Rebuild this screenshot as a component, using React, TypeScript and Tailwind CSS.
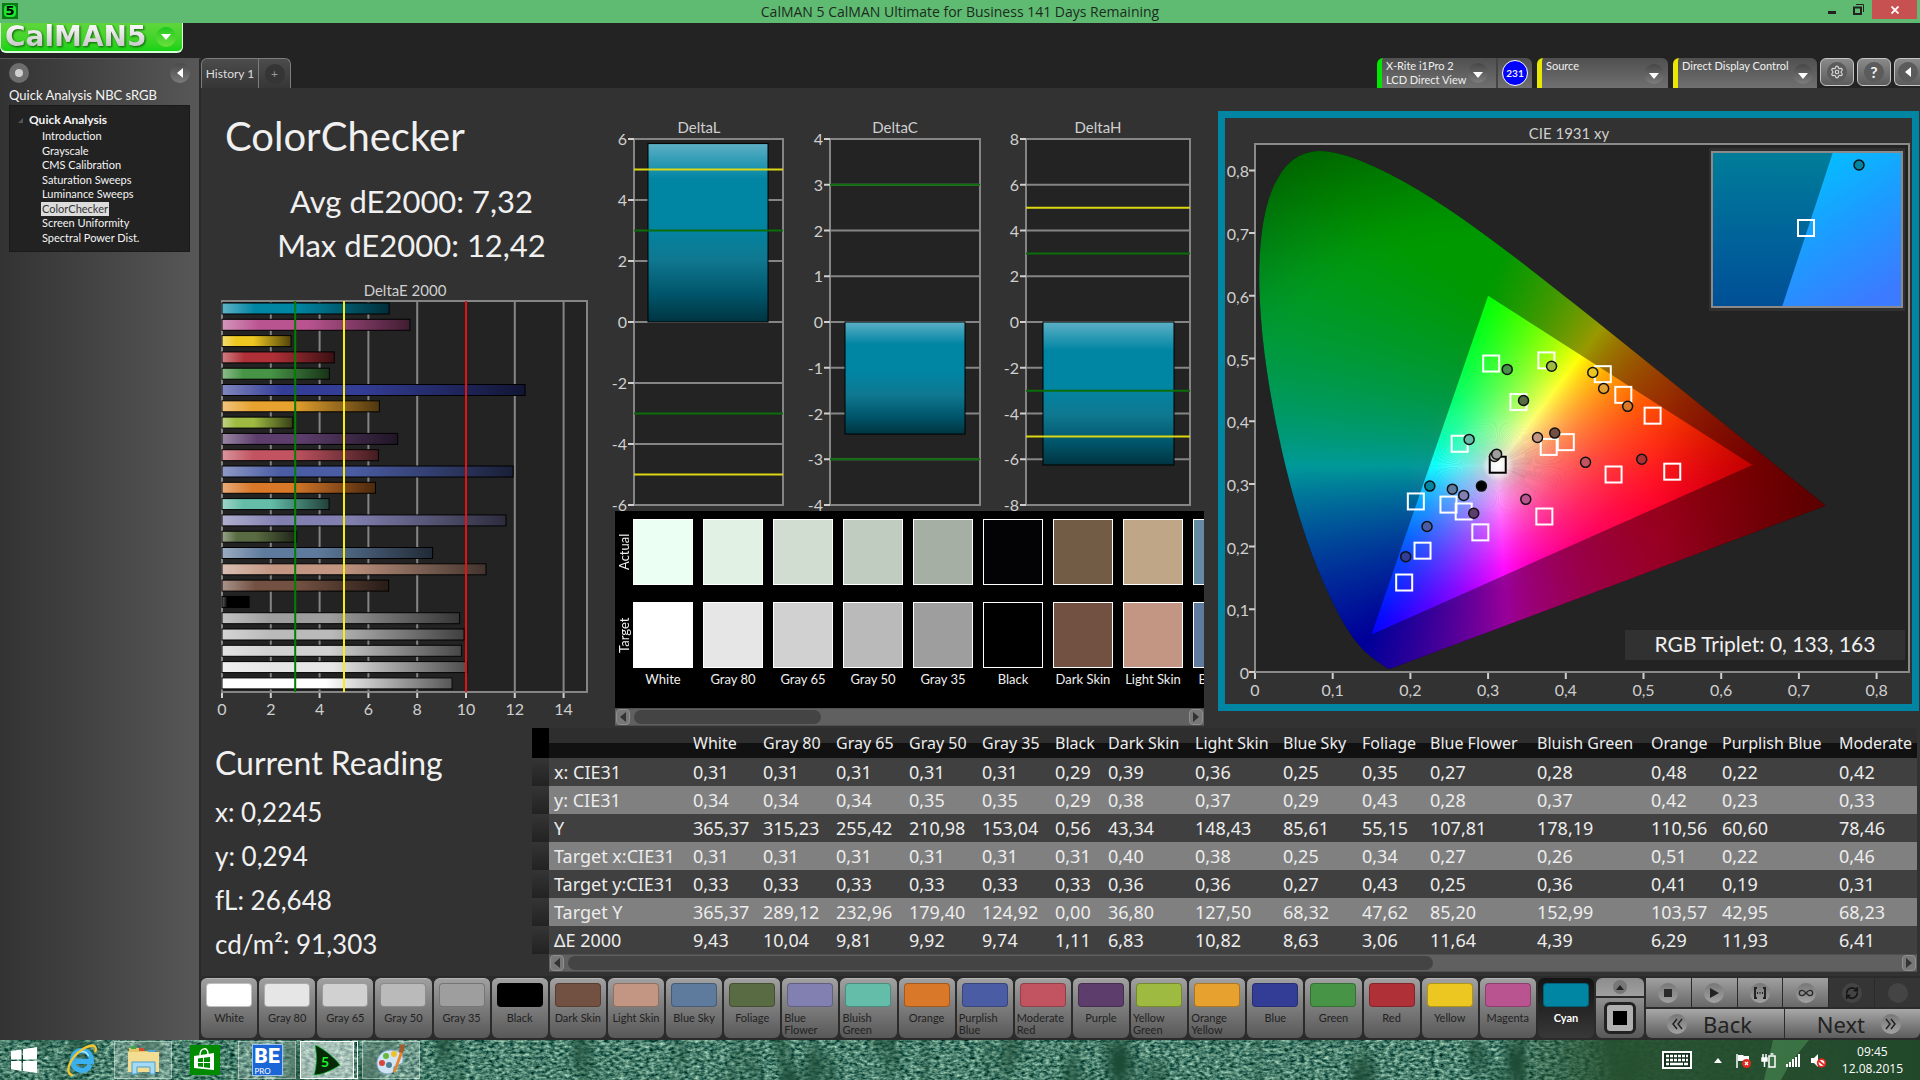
import type { ReactNode } from 'react';
import { Infinity as InfinityIcon, RefreshCw, Settings } from 'lucide-react';

interface Patch {
  name: string;
  color: string;
  deltaE: number;
}

interface Point {
  x: number;
  y: number;
}

interface DeltaChartProps {
  title: string;
  titleX: number;
  left: number;
  right: number;
  barLeft: number;
  barRight: number;
  max: number;
  step: number;
  value: number;
  limits: { at: number; color: string }[];
}

const patches: Patch[] = [
  { name: 'White', color: '#ffffff', deltaE: 9.43 },
  { name: 'Gray 80', color: '#e6e6e6', deltaE: 10.04 },
  { name: 'Gray 65', color: '#d1d1d1', deltaE: 9.81 },
  { name: 'Gray 50', color: '#bababa', deltaE: 9.92 },
  { name: 'Gray 35', color: '#9e9e9e', deltaE: 9.74 },
  { name: 'Black', color: '#000000', deltaE: 1.11 },
  { name: 'Dark Skin', color: '#735142', deltaE: 6.83 },
  { name: 'Light Skin', color: '#c29682', deltaE: 10.82 },
  { name: 'Blue Sky', color: '#5e7a9c', deltaE: 8.63 },
  { name: 'Foliage', color: '#596b42', deltaE: 3.06 },
  { name: 'Blue Flower', color: '#8280b0', deltaE: 11.64 },
  { name: 'Bluish Green', color: '#63bda8', deltaE: 4.39 },
  { name: 'Orange', color: '#d97829', deltaE: 6.29 },
  { name: 'Purplish Blue', color: '#4a5ca3', deltaE: 11.93 },
  { name: 'Moderate Red', color: '#c25461', deltaE: 6.41 },
  { name: 'Purple', color: '#5c3d6b', deltaE: 7.2 },
  { name: 'Yellow Green', color: '#9eba40', deltaE: 2.9 },
  { name: 'Orange Yellow', color: '#e6a12e', deltaE: 6.45 },
  { name: 'Blue', color: '#333d96', deltaE: 12.42 },
  { name: 'Green', color: '#479447', deltaE: 4.4 },
  { name: 'Red', color: '#b03038', deltaE: 4.6 },
  { name: 'Yellow', color: '#edc721', deltaE: 2.83 },
  { name: 'Magenta', color: '#ba5491', deltaE: 7.7 },
  { name: 'Cyan', color: '#0085a3', deltaE: 6.85 },
];

const actualColors = ['#ebfff3', '#e1f2e4', '#d0ddd0', '#bfccbf', '#a5afa4', '#030305', '#735c45', '#bfa686', '#6489a0'];

const tree = ['Introduction', 'Grayscale', 'CMS Calibration', 'Saturation Sweeps', 'Luminance Sweeps', 'ColorChecker', 'Screen Uniformity', 'Spectral Power Dist.'];

const readings = ['x: 0,2245', 'y: 0,294', 'fL: 26,648', 'cd/m²: 91,303'];

const columnWidths = [17, 139, 70, 73, 73, 73, 73, 53, 87, 88, 79, 68, 107, 114, 71, 117, 130];

const rows: { label: string; values: string[] }[] = [
  { label: 'x: CIE31', values: ['0,31', '0,31', '0,31', '0,31', '0,31', '0,29', '0,39', '0,36', '0,25', '0,35', '0,27', '0,28', '0,48', '0,22', '0,42'] },
  { label: 'y: CIE31', values: ['0,34', '0,34', '0,34', '0,35', '0,35', '0,29', '0,38', '0,37', '0,29', '0,43', '0,28', '0,37', '0,42', '0,23', '0,33'] },
  { label: 'Y', values: ['365,37', '315,23', '255,42', '210,98', '153,04', '0,56', '43,34', '148,43', '85,61', '55,15', '107,81', '178,19', '110,56', '60,60', '78,46'] },
  { label: 'Target x:CIE31', values: ['0,31', '0,31', '0,31', '0,31', '0,31', '0,31', '0,40', '0,38', '0,25', '0,34', '0,27', '0,26', '0,51', '0,22', '0,46'] },
  { label: 'Target y:CIE31', values: ['0,33', '0,33', '0,33', '0,33', '0,33', '0,33', '0,36', '0,36', '0,27', '0,43', '0,25', '0,36', '0,41', '0,19', '0,31'] },
  { label: 'Target Y', values: ['365,37', '289,12', '232,96', '179,40', '124,92', '0,00', '36,80', '127,50', '68,32', '47,62', '85,20', '152,99', '103,57', '42,95', '68,23'] },
  { label: 'ΔE 2000', values: ['9,43', '10,04', '9,81', '9,92', '9,74', '1,11', '6,83', '10,82', '8,63', '3,06', '11,64', '4,39', '6,29', '11,93', '6,41'] },
];

// ---- CIE 1931 geometry ----

const locus: [number, number][] = [
  [0.1741, 0.005], [0.1714, 0.0051], [0.1644, 0.0109], [0.1566, 0.0177], [0.144, 0.0297], [0.1355, 0.0399],
  [0.1241, 0.0578], [0.1096, 0.0868], [0.0913, 0.1327], [0.0687, 0.2007], [0.0454, 0.295], [0.0235, 0.4127],
  [0.0082, 0.5384], [0.0039, 0.6548], [0.0139, 0.7502], [0.0389, 0.812], [0.0743, 0.8338], [0.1142, 0.8262],
  [0.1547, 0.8059], [0.1929, 0.7816], [0.2296, 0.7543], [0.2658, 0.7243], [0.3016, 0.6923], [0.3373, 0.6589],
  [0.3731, 0.6245], [0.4441, 0.5547], [0.5125, 0.4866], [0.5752, 0.4242], [0.627, 0.3725], [0.6658, 0.334],
  [0.6915, 0.3083], [0.719, 0.2809], [0.7347, 0.2653],
];

const white: Point = { x: 0.3127, y: 0.329 };
const gamut: Point[] = [{ x: 0.64, y: 0.33 }, { x: 0.3, y: 0.6 }, { x: 0.15, y: 0.06 }];

const targets: [number, number][] = [
  [0.304, 0.492], [0.375, 0.497], [0.4476, 0.475], [0.474, 0.442], [0.5117, 0.4088], [0.339, 0.4305],
  [0.2634, 0.364], [0.378, 0.359], [0.4, 0.3666], [0.4615, 0.315], [0.537, 0.3195], [0.3724, 0.248],
  [0.207, 0.272], [0.249, 0.267], [0.2686, 0.256], [0.29, 0.2227], [0.2156, 0.1935], [0.192, 0.1427],
];

const measured: [number, number, string][] = [
  [0.3246, 0.4826, '#479447'], [0.3817, 0.4876, '#9eba40'], [0.4347, 0.4777, '#edc721'], [0.4487, 0.4522, '#e6a12e'],
  [0.4796, 0.4237, '#d97829'], [0.3456, 0.433, '#596b42'], [0.2756, 0.371, '#63bda8'], [0.3636, 0.374, '#c29682'],
  [0.3858, 0.381, '#735142'], [0.4254, 0.3344, '#c25461'], [0.4977, 0.3393, '#b03038'], [0.3485, 0.2754, '#ba5491'],
  [0.225, 0.2965, '#0085a3'], [0.254, 0.2916, '#5e7a9c'], [0.2686, 0.2816, '#8280b0'], [0.2815, 0.2531, '#5c3d6b'],
  [0.2214, 0.232, '#4a5ca3'], [0.194, 0.184, '#333d96'], [0.2914, 0.2965, '#000000'],
  [0.3083, 0.3437, '#bababa'], [0.311, 0.3474, '#9e9e9e'],
];

const px = (x: number) => 30 + x * 777;
const py = (y: number) => 554 - y * 627;

const locusPath = () => {
  const pts = locus.map(([x, y]) => [px(x), py(y)]);
  let d = `M${pts[0][0]} ${pts[0][1]}`;
  for (let i = 1; i < pts.length - 1; i++) {
    const mx = (pts[i][0] + pts[i + 1][0]) / 2;
    const my = (pts[i][1] + pts[i + 1][1]) / 2;
    d += `Q${pts[i][0]} ${pts[i][1]} ${mx} ${my}`;
  }
  const last = pts[pts.length - 1];
  return `${d}L${last[0]} ${last[1]}Z`;
};

// linear rgb of a chromaticity, scaled so that its largest channel is `level`
const xyColor = (x: number, yRaw: number, level: number) => {
  const y = Math.max(0.004, yRaw);
  const X = x / y;
  const Z = (1 - x - y) / y;
  const rgb = [
    3.2406 * X - 1.5372 - 0.4986 * Z,
    -0.9689 * X + 1.8758 + 0.0415 * Z,
    0.0557 * X - 0.204 + 1.057 * Z,
  ].map((v) => Math.max(0, v));
  const top = Math.max(...rgb);
  return `rgb(${rgb.map((v) => Math.round((255 * level * v) / top)).join(',')})`;
};

const REACH = 0.64;

const wedges = Array.from({ length: 360 }, (_, i) => {
  const angle = (i * Math.PI) / 180;
  const dx = Math.cos(angle);
  const dy = Math.sin(angle);
  const fade = 0.38 - 0.18 * Math.pow(Math.max(0, dx), 2);
  const at = (a: number, d: number) => ({ x: px(white.x + Math.cos(a) * d), y: py(white.y + Math.sin(a) * d) });
  const side = (a: number) => {
    const p = at(a, REACH);
    return `${p.x},${p.y}`;
  };
  return {
    id: i,
    points: `${px(white.x)},${py(white.y)} ${side(angle - 0.01)} ${side(angle + 0.02)}`,
    from: at(angle, 0),
    to: at(angle, REACH),
    stops: Array.from({ length: 17 }, (_, s) => {
      const d = s * 0.04;
      const level = Math.max(0.4, 1 - Math.max(0, d - fade) * 1.9);
      return { t: d / REACH, color: xyColor(white.x + dx * d, white.y + dy * d, level) };
    }),
  };
});

const number = (n: number) => n.toFixed(1).replace('.', ',').replace(/^0,0$/, '0');

function CieChart() {
  const ticks = [0, 0.1, 0.2, 0.3, 0.4, 0.5, 0.6, 0.7, 0.8];
  const triangle = gamut.map((p) => `${px(p.x)},${py(p.y)}`).join(' ');
  return (
    <svg viewBox="0 0 687 586" className="block w-full" role="img" aria-label="CIE 1931 xy">
      <defs>
        <clipPath id="locus"><path d={locusPath()} /></clipPath>
        <mask id="gamut">
          <rect width="687" height="586" fill="#999" />
          <polygon points={triangle} fill="#fff" />
        </mask>
        <radialGradient id="whitePoint">
          <stop offset="0" stopColor="#fff" /><stop offset="0.4" stopColor="#fff" stopOpacity="0.8" /><stop offset="1" stopColor="#fff" stopOpacity="0" />
        </radialGradient>
        <linearGradient id="insetDark" x1="0" y1="0" x2="0" y2="1">
          <stop offset="0" stopColor="#007d99" /><stop offset="0.6" stopColor="#00619a" /><stop offset="1" stopColor="#004f96" />
        </linearGradient>
        <linearGradient id="insetLight" x1="0.2" y1="0" x2="0.7" y2="1">
          <stop offset="0" stopColor="#00c4ff" /><stop offset="0.5" stopColor="#1c9cff" /><stop offset="1" stopColor="#3c7aff" />
        </linearGradient>
        {wedges.map((w) => (
          <linearGradient key={w.id} id={`ray${w.id}`} gradientUnits="userSpaceOnUse" x1={w.from.x} y1={w.from.y} x2={w.to.x} y2={w.to.y}>
            {w.stops.map((s) => <stop key={s.t} offset={s.t} stopColor={s.color} />)}
          </linearGradient>
        ))}
      </defs>

      <rect x="30" y="26" width="654" height="528" fill="#232323" stroke="#8a8a8a" strokeWidth="2" />
      <g clipPath="url(#locus)">
        <rect x="30" y="26" width="654" height="528" fill="#000" />
        <g mask="url(#gamut)">
          {wedges.map((w) => <polygon key={w.id} points={w.points} fill={`url(#ray${w.id})`} />)}
        </g>
        <circle cx={px(white.x)} cy={py(white.y)} r="16" fill="url(#whitePoint)" />
      </g>

      <g fontSize="16" fill="#cfcfcf">
        <text x="344" y="21" textAnchor="middle" fontSize="15">CIE 1931 xy</text>
        {ticks.map((t) => (
          <g key={t}>
            <path d={`M${px(t)} 555v6M24 ${py(t)}h6`} stroke="#cfcfcf" strokeWidth="2" />
            <text x={px(t)} y="578" textAnchor="middle">{number(t)}</text>
            <text x="24" y={py(t) + 7} textAnchor="end">{number(t)}</text>
          </g>
        ))}
      </g>

      {targets.map(([x, y]) => (
        <rect key={`${x}-${y}`} x={px(x) - 8} y={py(y) - 8} width="16" height="16" fill="none" stroke="#fff" strokeWidth="2" />
      ))}
      <rect x={px(0.3124) - 8} y={py(0.3306) - 8} width="16" height="16" fill="none" stroke="#000" strokeWidth="2" />
      {measured.map(([x, y, color]) => (
        <circle key={`${x}-${y}`} cx={px(x)} cy={py(y)} r="5" fill={color} stroke="#111" strokeWidth="1.5" />
      ))}

      <rect x="484" y="30" width="196" height="163" fill="#303030" />
      <rect x="487" y="34" width="190" height="155" fill="url(#insetDark)" />
      <path d="M608 34H677V189H557Z" fill="url(#insetLight)" />
      <rect x="487" y="34" width="190" height="155" fill="none" stroke="#8a8a8a" strokeWidth="2" />
      <rect x="573" y="102" width="16" height="16" fill="none" stroke="#fff" strokeWidth="2" />
      <circle cx="634" cy="47" r="5" fill="#0085a3" stroke="#111" strokeWidth="1.5" />

      <rect x="400" y="512" width="280" height="30" fill="#313131" />
      <text x="540" y="534" textAnchor="middle" fontSize="21" fill="#f0f0f0">RGB Triplet: 0, 133, 163</text>
    </svg>
  );
}

function DeltaEChart() {
  const x = (v: number) => 21 + v * 24.4;
  const bars = [...patches].reverse();
  return (
    <svg viewBox="0 0 407 440" className="mt-3 block w-full" role="img" aria-label="DeltaE 2000">
      <defs>
        <linearGradient id="shadeH">
          <stop offset="0" stopColor="#fff" stopOpacity="0.38" /><stop offset="0.2" stopColor="#fff" stopOpacity="0" />
          <stop offset="0.45" stopColor="#000" stopOpacity="0" /><stop offset="1" stopColor="#000" stopOpacity="0.66" />
        </linearGradient>
      </defs>
      <rect x="21" y="21" width="365" height="391" fill="#232323" stroke="#858585" strokeWidth="2" />
      {[2, 4, 6, 8, 10, 12, 14].map((t) => <path key={t} d={`M${x(t)} 21V412`} stroke="#858585" strokeWidth="2" />)}
      {bars.map((p, i) => {
        const top = 23 + i * 16.3;
        return (
          <g key={p.name}>
            <rect x="21" y={top} width={x(p.deltaE) - 21} height="11" fill={p.color} />
            <rect x="21" y={top} width={x(p.deltaE) - 21} height="11" fill="url(#shadeH)" stroke="#000" />
          </g>
        );
      })}
      <path d={`M${x(3)} 21V412`} stroke="#008000" strokeWidth="2" />
      <path d={`M${x(5)} 21V412`} stroke="#f5ee1c" strokeWidth="2" />
      <path d={`M${x(10)} 21V412`} stroke="#e01414" strokeWidth="2" />
      <g fontSize="16" fill="#cfcfcf" textAnchor="middle">
        <text x="204" y="16" fontSize="15">DeltaE 2000</text>
        {[0, 2, 4, 6, 8, 10, 12, 14].map((t) => (
          <g key={t}>
            <path d={`M${x(t)} 413v5`} stroke="#cfcfcf" strokeWidth="2" />
            <text x={x(t)} y="435">{t}</text>
          </g>
        ))}
      </g>
    </svg>
  );
}

function DeltaChart({ title, titleX, left, right, barLeft, barRight, max, step, value, limits }: DeltaChartProps) {
  const y = (v: number) => 211 - (v / max) * 183;
  const ticks: number[] = [];
  for (let v = max; v >= -max; v -= step) ticks.push(v);
  const top = Math.min(y(0), y(value));
  const height = Math.abs(y(value) - y(0));
  return (
    <g>
      <text x={titleX} y="22" textAnchor="middle" fontSize="15" fill="#cfcfcf">{title}</text>
      <rect x={left} y="28" width={right - left} height="366" fill="#232323" stroke="#858585" strokeWidth="2" />
      {ticks.map((t) => (
        <g key={t}>
          <path d={`M${left} ${y(t)}H${right}`} stroke="#858585" strokeWidth="2" />
          <path d={`M${left - 6} ${y(t)}h6`} stroke="#cfcfcf" strokeWidth="2" />
          <text x={left - 7} y={y(t) + 6} textAnchor="end" fontSize="16" fill="#cfcfcf">{t}</text>
        </g>
      ))}
      <rect x={barLeft} y={top} width={barRight - barLeft} height={height} fill="url(#shadeV)" stroke="#000" />
      {limits.map((l) => <path key={l.at} d={`M${left} ${y(l.at)}H${right}`} stroke={l.color} strokeWidth="2" />)}
    </g>
  );
}

function DeltaCharts() {
  const green = '#0a6e0a';
  const yellow = '#dcd614';
  return (
    <svg viewBox="0 0 605 400" className="block w-full overflow-visible" role="img" aria-label="DeltaL, DeltaC and DeltaH">
      <defs>
        <linearGradient id="shadeV" x1="0" y1="0" x2="0" y2="1">
          <stop offset="0" stopColor="#5db0c6" /><stop offset="0.2" stopColor="#0085a3" /><stop offset="0.45" stopColor="#0085a3" />
          <stop offset="0.65" stopColor="#0f7890" /><stop offset="0.85" stopColor="#005469" /><stop offset="1" stopColor="#003440" />
        </linearGradient>
      </defs>
      <DeltaChart title="DeltaL" titleX={91} left={26} right={175} barLeft={40} barRight={160} max={6} step={2} value={5.85}
        limits={[{ at: 5, color: yellow }, { at: 3, color: green }, { at: -3, color: green }, { at: -5, color: yellow }]} />
      <DeltaChart title="DeltaC" titleX={287} left={222} right={372} barLeft={237} barRight={357} max={4} step={1} value={-2.45}
        limits={[{ at: 3, color: green }, { at: -3, color: green }]} />
      <DeltaChart title="DeltaH" titleX={490} left={418} right={582} barLeft={435} barRight={566} max={8} step={2} value={-6.25}
        limits={[{ at: 5, color: yellow }, { at: 3, color: green }, { at: -3, color: green }, { at: -5, color: yellow }]} />
    </svg>
  );
}

function ScrollBar({ thumb }: { thumb: string }) {
  return (
    <div className="flex h-[18px] items-center gap-1 border-y border-[#505050] bg-[#606060] px-px">
      <button aria-label="Scroll left" className="flex h-4 w-3.5 items-center justify-center rounded-sm border border-[#8f8f8f] bg-[#777777]">
        <svg viewBox="0 0 8 10" className="h-2.5 w-2"><path d="M7 0v10L1 5z" fill="#333" /></svg>
      </button>
      <div className="h-full flex-1 py-px">
        <div className={`h-full rounded-lg bg-[#444444] ${thumb}`} />
      </div>
      <button aria-label="Scroll right" className="flex h-4 w-3.5 items-center justify-center rounded-sm border border-[#8f8f8f] bg-[#777777]">
        <svg viewBox="0 0 8 10" className="h-2.5 w-2"><path d="M1 0v10l6-5z" fill="#333" /></svg>
      </button>
    </div>
  );
}

function SwatchCompare() {
  const shown = patches.slice(0, 9);
  return (
    <div className="ml-[7px] mr-[9px]">
      <div className="flex h-[197px] overflow-hidden bg-black pt-2 text-[#f0f0f0]">
        <div className="flex w-[18px] shrink-0 flex-col gap-[17px] text-[13px] leading-[18px]">
          <span className="h-[66px] rotate-180 text-center [writing-mode:vertical-rl]">Actual</span>
          <span className="h-[66px] rotate-180 text-center [writing-mode:vertical-rl]">Target</span>
        </div>
        <div className="flex min-w-0 flex-1 gap-2.5 overflow-hidden">
          {shown.map((p, i) => (
            <div key={p.name} className="flex w-[60px] shrink-0 flex-col text-center text-[13px]">
              <div className="mb-[17px] h-[66px] border border-white" style={{ backgroundColor: actualColors[i] }} />
              <div className="h-[66px] border border-white" style={{ backgroundColor: p.color }} />
              <span className="mt-0.5 whitespace-nowrap">{p.name}</span>
            </div>
          ))}
        </div>
      </div>
      <ScrollBar thumb="w-[34%]" />
    </div>
  );
}

function RoundGlyph({ children }: { children: ReactNode }) {
  return (
    <span className="flex size-5 items-center justify-center rounded-full bg-linear-to-b from-[#777777] to-[#a2a2a2] text-[#2a2a2a]">
      {children}
    </span>
  );
}

function DropGlyph() {
  return (
    <span className="flex size-5 shrink-0 items-center justify-center rounded-full bg-linear-to-b from-[#474747] to-[#7d7d7d]">
      <svg viewBox="0 0 10 6" className="mt-1 h-1.5 w-2.5"><path d="M0 0h10L5 6z" fill="#fff" /></svg>
    </span>
  );
}

function Logo() {
  return (
    <div className="flex h-[30px] w-[183px] items-center justify-between rounded-b-md border-x border-b-2 border-[#d9ffd9] bg-linear-to-b from-[#5fd63c] to-[#12d312] pl-1 pr-1.5">
      <span className="bg-linear-to-b from-white to-[#bdbdbd] bg-clip-text font-['DejaVu_Sans',sans-serif] text-[28px] font-bold leading-7 text-transparent drop-shadow-[1px_1px_1px_rgba(0,60,0,0.8)]">
        CalMAN5
      </span>
      <button aria-label="Main menu" className="flex size-5 items-center justify-center rounded-full bg-linear-to-b from-[#10c81e] to-[#6ae03c]">
        <svg viewBox="0 0 10 6" className="h-1.5 w-2.5"><path d="M0 0h10L5 6z" fill="#fff" /></svg>
      </button>
    </div>
  );
}

function TitleBar() {
  return (
    <div className="grid h-[23px] grid-cols-[1fr_auto_1fr] items-start bg-[#5fbb71]">
      <div className="ml-0.5 mt-[3px] flex size-4 items-center justify-center bg-[#0a7a14] font-['DejaVu_Sans',sans-serif] text-[13px] font-bold text-black">
        <span className="flex size-3 items-center justify-center rounded-sm bg-[#1ee62e]">5</span>
      </div>
      <h1 className="font-['Open_Sans',sans-serif] text-sm leading-[23px] text-[#1c2b1f]">
        CalMAN 5 CalMAN Ultimate for Business 141 Days Remaining
      </h1>
      <div className="flex h-[19px] items-center justify-end pr-[3px]">
        <button aria-label="Minimize" className="flex h-full w-6 items-center justify-center">
          <span className="mt-1.5 h-[3px] w-2 bg-[#222]" />
        </button>
        <button aria-label="Restore" className="flex h-full w-7 items-center justify-center">
          <svg viewBox="0 0 11 11" className="size-[11px]" fill="none" stroke="#222">
            <path d="M3 .5h7.500v7.500" /><rect x="1" y="3.500" width="7" height="6.500" strokeWidth="2" />
          </svg>
        </button>
        <button aria-label="Close" className="flex h-full w-[45px] items-center justify-center bg-[#c75050]">
          <svg viewBox="0 0 8 8" className="size-2" stroke="#fff" strokeWidth="1.800"><path d="M.5.5l7 7M7.500.5l-7 7" /></svg>
        </button>
      </div>
    </div>
  );
}

function Sidebar() {
  return (
    <aside className="w-[201px] shrink-0 border-r-2 border-t border-[#2a2a2a] border-t-[#555555] bg-linear-to-r from-[#333333] to-[#575757] px-[9px] text-[13px] text-[#f4f4f4]">
      <div className="flex h-[27px] items-center justify-between">
        <button aria-label="Pin" className="flex size-5 items-center justify-center rounded-full bg-[#6d6d6d]">
          <span className="size-2 rounded-full bg-[#cfcfcf]" />
        </button>
        <button aria-label="Collapse panel" className="flex size-5 items-center justify-center rounded-full bg-linear-to-b from-[#4a4a4a] to-[#7b7b7b]">
          <svg viewBox="0 0 6 10" className="h-2.5 w-1.5"><path d="M6 0v10L0 5z" fill="#fff" /></svg>
        </button>
      </div>
      <p className="leading-[19px] whitespace-nowrap">Quick Analysis NBC sRGB</p>
      <nav className="h-[147px] border border-[#1a1a1a] bg-[#222222] pt-[5px]">
        <div className="flex h-[18px] items-center gap-1.5 pl-2 text-xs font-bold">
          <svg viewBox="0 0 5 5" className="size-[5px]"><path d="M5 0v5H0z" fill="#555" /></svg>
          Quick Analysis
        </div>
        <ul className="flex h-[116px] flex-col items-start justify-between pl-[31px] text-[11px] leading-[14px]">
          {tree.map((item) => (
            <li key={item} className="whitespace-nowrap">
              <a href={`#${item}`} className={item === 'ColorChecker' ? 'block bg-[#dcdcdc] px-px text-[#333333]' : 'block px-px'}>{item}</a>
            </li>
          ))}
        </ul>
      </nav>
    </aside>
  );
}

function Toolbar() {
  return (
    <div className="flex h-[30px] items-end justify-between text-xs text-[#efefef]">
      <div className="flex h-full rounded-t-md border border-b-0 border-[#7d7d7d] bg-linear-to-b from-[#4c4c4c] to-[#363636]">
        <button className="w-14 text-xs text-[#dedede]">History 1</button>
        <button aria-label="Add history" className="flex w-8 items-center justify-center border-l border-[#7d7d7d]">
          <span className="flex size-5 items-center justify-center rounded-full bg-[#353535] text-[#9a9a9a]">+</span>
        </button>
      </div>
      <div className="flex h-full items-start gap-[5px] text-left leading-[14px]">
        <div className="flex h-full w-[155px] items-center overflow-hidden rounded-t-md border-l-[5px] border-[#00e600] bg-linear-to-b from-[#505050] to-[#707070]">
          <button className="flex h-full flex-1 items-center justify-between pl-1 pr-2 text-left text-[11px] whitespace-nowrap">
            <span>X-Rite i1Pro 2<br />LCD Direct View</span>
            <DropGlyph />
          </button>
          <div className="flex h-full w-9 items-center justify-center border-l-2 border-[#444444]">
            <span className="flex size-[26px] items-center justify-center rounded-full border border-white bg-[#0000ff] text-[10px] font-bold">231</span>
          </div>
        </div>
        <button className="flex h-full w-[131px] justify-between rounded-t-md border-l-[5px] border-[#e8e800] bg-linear-to-b from-[#505050] to-[#707070] pl-1 pr-1 text-left text-[11px]">
          <span className="pt-px">Source</span>
          <span className="pt-1.5"><DropGlyph /></span>
        </button>
        <div className="flex h-full items-start gap-[3px]">
          <button className="flex h-full w-[144px] justify-between rounded-t-md border-l-[5px] border-[#e8e800] bg-linear-to-b from-[#505050] to-[#707070] pl-1 pr-1 text-left text-[11px] whitespace-nowrap">
            <span className="pt-px">Direct Display Control</span>
            <span className="pt-1.5"><DropGlyph /></span>
          </button>
          <button aria-label="Settings" className="flex h-7 w-[34px] items-center justify-center rounded-md border border-[#c4c4c4] bg-linear-to-b from-[#8a8a8a] to-[#5c5c5c]">
            <span className="flex size-5 items-center justify-center rounded-full bg-[#5b5b5b]"><Settings className="size-3.5 text-[#d8d8d8]" /></span>
          </button>
          <button aria-label="Help" className="flex h-7 w-[34px] items-center justify-center rounded-md border border-[#c4c4c4] bg-linear-to-b from-[#8a8a8a] to-[#5c5c5c]">
            <span className="flex size-5 items-center justify-center rounded-full bg-[#5b5b5b] text-base font-bold">?</span>
          </button>
          <button aria-label="Collapse toolbar" className="flex h-7 w-[26px] items-center justify-center rounded-l-md border border-r-0 border-[#c4c4c4] bg-linear-to-b from-[#8a8a8a] to-[#5c5c5c]">
            <span className="flex size-5 items-center justify-center rounded-full bg-[#5b5b5b]">
              <svg viewBox="0 0 6 10" className="h-2.5 w-1.5"><path d="M6 0v10L0 5z" fill="#fff" /></svg>
            </span>
          </button>
        </div>
      </div>
    </div>
  );
}

function DataTable() {
  return (
    <div className="mr-[3px] min-w-0 flex-1 overflow-hidden font-['Noto_Sans',sans-serif] text-[#ececec]">
      <table className="w-[1432px] table-fixed border-collapse text-left whitespace-nowrap">
        <colgroup>
          {columnWidths.map((w, i) => <col key={i} style={{ width: w }} />)}
        </colgroup>
        <thead>
          <tr className="h-[30px] bg-linear-to-b from-[#2e2e2e] from-50% to-[#111111] to-50% text-base">
            <td className="bg-black" />
            <td />
            {patches.slice(0, 15).map((p) => <th key={p.name} scope="col" className="pl-[5px] font-normal">{p.name}</th>)}
          </tr>
        </thead>
        <tbody>
          {rows.map((row) => (
            <tr key={row.label} className="h-7 bg-[#404040] text-[18px] leading-7 even:bg-[#808080]">
              <td className="bg-linear-to-b from-[#353535] to-[#222222]" />
              <th scope="row" className="pl-[5px] font-normal">{row.label}</th>
              {row.values.map((v, i) => <td key={i} className="pl-[5px]">{v}</td>)}
            </tr>
          ))}
        </tbody>
      </table>
      <div className="ml-[17px]"><ScrollBar thumb="w-[65%]" /></div>
    </div>
  );
}

function PatchBar() {
  const tool = 'flex h-[29px] flex-1 items-center justify-center bg-linear-to-b from-[#a0a0a0] to-[#696969]';
  const toolOff = 'flex h-[29px] flex-1 items-center justify-center bg-[#353535]';
  return (
    <div className="flex h-16 gap-0.5 bg-[#2b2b2b] pb-0.5 pt-0.5 text-[#222222]">
      <div className="flex flex-1 gap-0.5">
        {patches.map((p) => (
          <button
            key={p.name}
            className={
              p.name === 'Cyan'
                ? 'flex min-w-0 flex-1 flex-col items-center rounded-md bg-linear-to-b from-[#141414] to-[#383838] pt-[5px] font-bold text-white'
                : 'flex min-w-0 flex-1 flex-col items-center rounded-md border-t border-[#b5b5b5] bg-linear-to-b from-[#a0a0a0] to-[#585858] pt-1'
            }
          >
            <span className="h-6 w-[46px] rounded border border-black/25" style={{ backgroundColor: p.color }} />
            <span className="mt-[5px] max-w-[52px] text-left text-[11px] leading-3">{p.name}</span>
          </button>
        ))}
      </div>
      <div className="flex w-12 flex-col gap-0.5">
        <button aria-label="Previous series" className="flex h-[18px] items-center justify-center rounded-t-md bg-linear-to-b from-[#8d8d8d] to-[#a0a0a0]">
          <span className="flex size-3.5 items-center justify-center rounded-full bg-[#777777]">
            <svg viewBox="0 0 8 5" className="h-[5px] w-2"><path d="M0 5h8L4 0z" fill="#222" /></svg>
          </span>
        </button>
        <button aria-label="Stop pattern" className="flex flex-1 items-center justify-center rounded-b-md bg-linear-to-b from-[#8f8f8f] to-[#585858]">
          <span className="flex size-8 items-center justify-center rounded-md border-[3px] border-[#222222] bg-[#b0b0b0]">
            <span className="size-3.5 bg-black" />
          </span>
        </button>
      </div>
      <div className="flex w-[274px] flex-col gap-0.5">
        <div className="flex gap-px">
          <button aria-label="Stop" className={tool}><RoundGlyph><span className="size-2 bg-[#2a2a2a]" /></RoundGlyph></button>
          <button aria-label="Play" className={tool}>
            <RoundGlyph><svg viewBox="0 0 9 10" className="h-2.5 w-[9px]"><path d="M0 0v10l9-5z" fill="#222" /></svg></RoundGlyph>
          </button>
          <button aria-label="Read series" className={tool}>
            <RoundGlyph>
              <svg viewBox="0 0 14 12" className="h-3 w-3.5" fill="none" stroke="#222" strokeWidth="2">
                <path d="M4 1H2v10h2M10 1h2v10h-2M4 6h1M6.500 6h1M9 6h1" />
              </svg>
            </RoundGlyph>
          </button>
          <button aria-label="Continuous" className={tool}><RoundGlyph><InfinityIcon className="size-4" /></RoundGlyph></button>
          <button aria-label="Refresh" className={toolOff}>
            <span className="flex size-5 items-center justify-center rounded-full bg-[#444444] text-[#161616]"><RefreshCw className="size-3.5" strokeWidth={3} /></span>
          </button>
          <button aria-label="Record" className={toolOff}><span className="size-5 rounded-full bg-[#444444]" /></button>
        </div>
        <div className="flex flex-1 gap-px font-['Noto_Sans',sans-serif] text-[22px] leading-7">
          <button className="flex flex-1 items-center gap-4 rounded-bl-md bg-linear-to-b from-[#a8a8a8] to-[#5d5d5d] pl-[21px]">
            <RoundGlyph><Chevrons /></RoundGlyph>Back
          </button>
          <button className="flex flex-1 items-center justify-end gap-4 rounded-br-md bg-linear-to-b from-[#a8a8a8] to-[#5d5d5d] pr-[19px]">
            Next<RoundGlyph><Chevrons flip /></RoundGlyph>
          </button>
        </div>
      </div>
    </div>
  );
}

function Chevrons({ flip }: { flip?: boolean }) {
  return (
    <svg viewBox="0 0 12 12" className={flip ? 'size-3 rotate-180' : 'size-3'} fill="none" stroke="#222" strokeWidth="1.500">
      <path d="M6 1L2 6l4 5M11 1L7 6l4 5" />
    </svg>
  );
}

function TaskBar() {
  const tile = 'flex h-[38px] w-[58px] items-center justify-center border border-white/40 bg-white/20';
  return (
    <footer className="relative flex h-10 items-center justify-between overflow-hidden bg-[#2f6a55]">
      <svg className="absolute inset-0 size-full" aria-hidden="true">
        <defs>
          <filter id="canvasTexture" x="0" y="0" width="100%" height="100%" colorInterpolationFilters="sRGB">
            <feTurbulence type="fractalNoise" baseFrequency="0.2 0.35" numOctaves="3" seed="8" />
            <feColorMatrix values="1.1 0 0 0 -0.26  1 0 0 0 0  0.9 0 0 0 -0.02  0 0 0 0 1" />
          </filter>
          <filter id="streaks" x="0" y="0" width="100%" height="100%" colorInterpolationFilters="sRGB">
            <feTurbulence type="fractalNoise" baseFrequency="0.03 0.012" numOctaves="2" seed="3" />
            <feColorMatrix values="0 0 0 0 0.11  0 0 0 0 0.3  0 0 0 0 0.22  3 0 0 0 -1.5" />
          </filter>
          <linearGradient id="rightShade">
            <stop offset="0.78" stopColor="#26502f" stopOpacity="0" />
            <stop offset="0.84" stopColor="#26502f" stopOpacity="0.92" />
            <stop offset="1" stopColor="#22482a" />
          </linearGradient>
        </defs>
        <rect width="100%" height="100%" filter="url(#canvasTexture)" />
        <rect width="100%" height="100%" filter="url(#streaks)" />
        <rect width="100%" height="100%" fill="url(#rightShade)" />
        <path d="M1773 0h36l-18 22-10 18h-17z" fill="#4d9258" opacity="0.55" />
      </svg>
      <div className="relative flex items-center gap-1">
        <button aria-label="Start" className="flex w-[50px] justify-center pr-0.5">
          <svg viewBox="0 0 26 26" className="size-[26px]" fill="#fff">
            <path d="M0 4l10.500-1.500v10H0zM12 2.300L26 0v12.500H12zM0 14h10.500v10L0 22.300zM12 14h14v12l-14-2z" />
          </svg>
        </button>
        <button aria-label="Internet Explorer" className="flex w-14 justify-center">
          <svg viewBox="0 0 34 34" className="size-8" fill="none">
            <path d="M26 22c-2 4-5 6-9 6-6 0-10-4-10-10.500S11 7 17 7s10 4 10 11.500H10" stroke="#3bb0ee" strokeWidth="5.500" />
            <path d="M10 13c1-3 4-5 7-5s6 2 7 5" stroke="#b5e8ff" strokeWidth="1.500" />
            <path d="M7 33C-3 32 5 13 17 6 26 0 34 0 31 9" stroke="#f2c62c" strokeWidth="2.500" />
          </svg>
        </button>
        <button aria-label="File Explorer" className={tile}>
          <svg viewBox="0 0 34 30" className="h-[30px] w-[34px]">
            <path d="M3 3h10l2 3h14v21H3z" fill="#e6c565" /><path d="M5 1h5v3H5z" fill="#3fa648" /><path d="M13 3h5v3h-5z" fill="#d54a34" />
            <path d="M22 5h7v3h-7z" fill="#4ea5e0" /><path d="M2 7h31v20H2z" fill="#f3dd92" />
            <path d="M6 29V17h23v12h-5v-7H11v7z" fill="#a5daf5" stroke="#4a9ed0" />
          </svg>
        </button>
        <button aria-label="Store" className="flex w-[58px] justify-center">
          <svg viewBox="0 0 30 30" className="size-[30px]">
            <rect width="30" height="30" fill="#008a00" />
            <path d="M4 11l20-3v17l-20-2z" fill="#fff" />
            <path d="M10 10c0-7 8-9 8-1" stroke="#fff" strokeWidth="1.500" fill="none" />
            <path d="M8 13.500l5-.7v4.200H8zM14 12.700l6-.8V17h-6zM8 18h5v4l-5-.6zM14 18h6v5l-6-.8z" fill="#008a00" />
          </svg>
        </button>
        <button aria-label="BE Pro" className={tile}>
          <span className="flex h-8 w-[31px] flex-col items-center border border-white/60 bg-[#1a66d6] leading-none text-white">
            <span className="font-['Roboto',sans-serif] text-[21px] font-black leading-[22px]">BE</span>
            <span className="self-start pl-0.5 text-[8px] leading-2">PRO</span>
          </span>
        </button>
        <button aria-label="CalMAN" className="flex h-[38px] w-[58px] border border-white">
          <span className="flex h-full flex-1 items-center justify-center border-r border-white bg-white/50">
            <svg viewBox="0 0 28 32" className="h-8 w-7">
              <path d="M2 1C10 4 22 14 27 21 18 27 8 31 1 31 4 22 4 10 2 1z" fill="#062a08" stroke="#0c3" strokeWidth=".6" />
              <text x="12" y="23" textAnchor="middle" fontSize="14" fontWeight="bold" fill="#1cf02c">5</text>
            </svg>
          </span>
          <span className="h-full w-[3px]" />
        </button>
        <button aria-label="Paint" className={tile}>
          <svg viewBox="0 0 32 32" className="size-8">
            <path d="M16 6C6 6 1 14 2 21s8 11 15 8c3-2 0-5 3-7 4-2 7-1 8-5C29 10 24 6 16 6z" fill="#cfe4f4" stroke="#7da3c0" />
            <circle cx="7" cy="19" r="3" fill="#d9443c" /><circle cx="11" cy="12" r="3" fill="#6ab53c" /><circle cx="19" cy="10" r="3" fill="#f0c22a" /><circle cx="14" cy="21" r="3" fill="#4d7f95" />
            <path d="M25 8l3 1-8 20-2-1z" fill="#e8862a" /><path d="M25 1l5-1-2 9-4-1z" fill="#a55a2a" />
          </svg>
        </button>
      </div>
      <div className="relative flex items-center gap-2.5 pr-[17px] font-['Open_Sans',sans-serif] text-xs text-white">
        <svg viewBox="0 0 30 18" className="mr-3 h-[18px] w-[30px]">
          <rect x="1" y="1" width="28" height="16" fill="#14301c" stroke="#fff" strokeWidth="2" />
          <path d="M4 5h22M4 9h22" stroke="#fff" strokeWidth="2.500" strokeDasharray="3 1" /><path d="M4 13h3M8 13h13M22 13h4" stroke="#fff" strokeWidth="2.500" />
        </svg>
        <svg viewBox="0 0 8 5" className="mr-1 h-[5px] w-2"><path d="M0 5h8L4 0z" fill="#fff" /></svg>
        <svg viewBox="0 0 15 15" className="size-[15px]">
          <path d="M1 1v14" stroke="#fff" strokeWidth="1.500" /><path d="M2 2h5l1 1h5v6H8L7 8H2z" fill="#fff" />
          <circle cx="10.500" cy="10.500" r="4.500" fill="#e02a20" /><path d="M9 9l3 3M12 9l-3 3" stroke="#fff" strokeWidth="1.300" />
        </svg>
        <svg viewBox="0 0 15 15" className="size-[15px]" fill="none" stroke="#fff" strokeWidth="1.500">
          <path d="M2 1v4M5 1v4M3.500 8v6M9.500 1h3" /><path d="M1 5h5v3H1z" fill="#fff" /><rect x="8" y="3" width="6" height="11" />
        </svg>
        <svg viewBox="0 0 15 13" className="h-[13px] w-[15px]" fill="#fff">
          <path d="M0 10h2v3H0zM3 8h2v5H3zM6 5h2v8H6zM9 3h2v10H9zM12 0h2v13h-2z" />
        </svg>
        <svg viewBox="0 0 15 15" className="size-[15px]">
          <path d="M0 5h3l4-4v13l-4-4H0z" fill="#fff" /><circle cx="10.500" cy="10" r="3.800" fill="#fff" stroke="#e02a20" strokeWidth="1.800" /><path d="M8 8l5 4" stroke="#e02a20" strokeWidth="1.800" />
        </svg>
        <div className="ml-1.5 text-center leading-[17px]">
          <div>09:45</div>
          <div>12.08.2015</div>
        </div>
      </div>
    </footer>
  );
}

export default function App() {
  return (
    <div className="flex min-h-screen flex-col overflow-hidden bg-[#232323] font-[Lato,sans-serif]">
      <TitleBar />
      <header className="h-[35px]"><Logo /></header>
      <div className="flex flex-1">
        <Sidebar />
        <div className="flex min-w-0 flex-1 flex-col">
          <Toolbar />
          <main className="flex flex-1 flex-col bg-[#323232]">
            <div className="grid flex-1 grid-cols-[minmax(0,407fr)_minmax(0,605fr)_minmax(0,707fr)]">
              <section className="pt-5 text-[#f0f0f0]">
                <h2 className="pl-6 text-[40px] leading-[56px]">ColorChecker</h2>
                <div className="mb-[13px] mt-[15px] pl-3.5 text-center text-[31px] leading-[44px]">
                  <p>Avg dE2000: 7,32</p>
                  <p>Max dE2000: 12,42</p>
                </div>
                <DeltaEChart />
              </section>
              <section className="pt-[23px]">
                <DeltaCharts />
                <SwatchCompare />
              </section>
              <section className="pl-[5px] pr-px pt-[23px]">
                <div className="border-[7px] border-[#0085a3]"><CieChart /></div>
              </section>
            </div>
            <div className="flex h-[248px]">
              <section className="w-[331px] shrink-0 pl-3.5 pt-[13px] text-[#f0f0f0]">
                <h2 className="text-[32px] leading-[44px]">Current Reading</h2>
                <div className="pt-[5px] text-[26px] leading-[44px]">
                  {readings.map((r) => <p key={r}>{r}</p>)}
                </div>
              </section>
              <DataTable />
            </div>
          </main>
          <PatchBar />
        </div>
      </div>
      <TaskBar />
    </div>
  );
}
